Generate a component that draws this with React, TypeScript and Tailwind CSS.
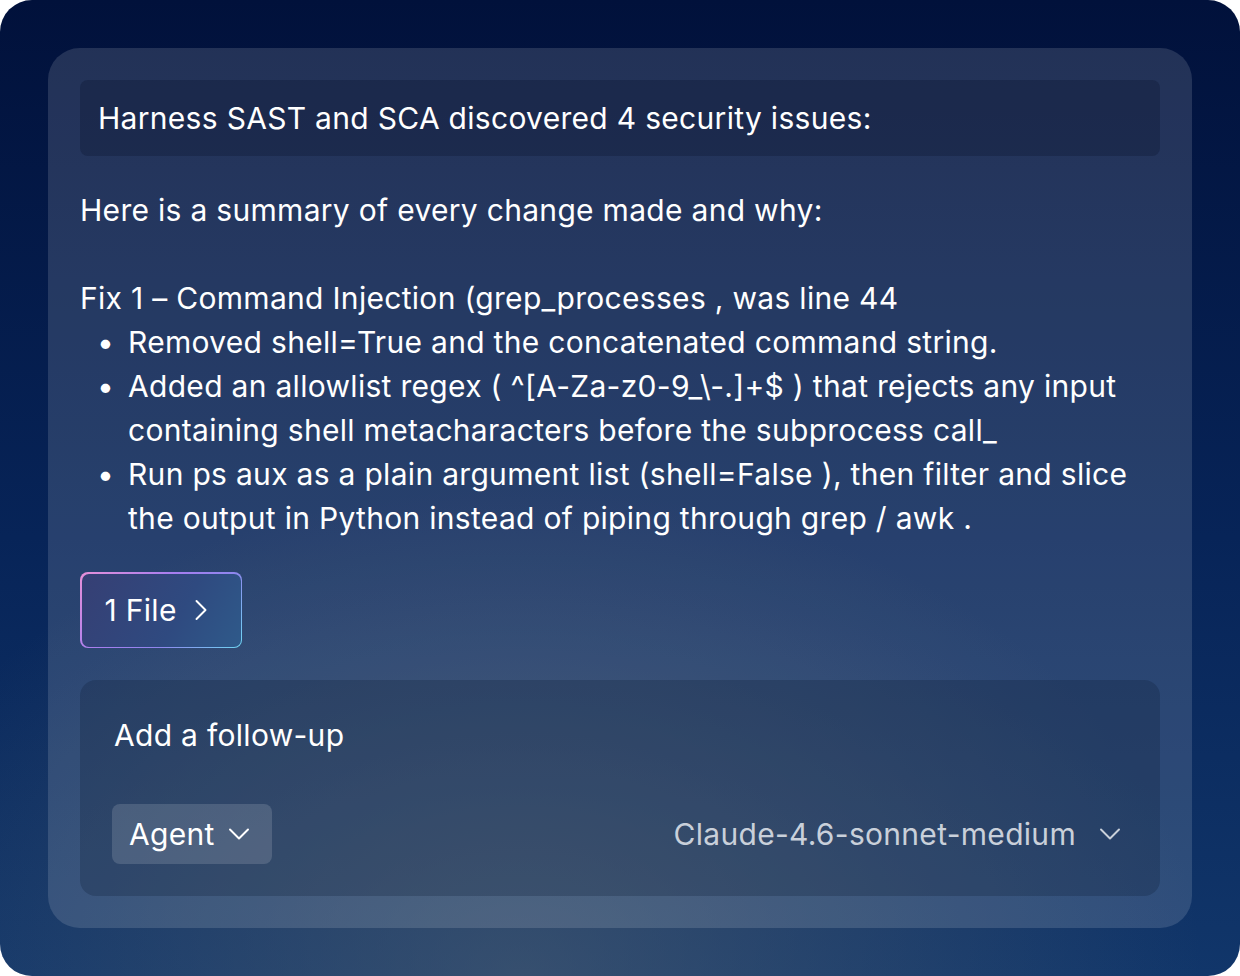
import React from 'react';
import { ChevronRight, ChevronDown } from 'lucide-react';

const bullets = [
  ['Removed shell=True and the concatenated command string.'],
  [
    'Added an allowlist regex ( ^[A-Za-z0-9_\\-.]+$ ) that rejects any input',
    'containing shell metacharacters before the subprocess call_',
  ],
  [
    'Run ps aux as a plain argument list (shell=False ), then filter and slice',
    'the output in Python instead of piping through grep / awk .',
  ],
];

export default function App() {
  return (
    <div className="bg-white w-[1240px] h-[976px]" style={{ fontFamily: 'Inter, "Noto Sans", sans-serif' }}>
      <div className="relative w-[1240px] h-[976px] rounded-[32px] overflow-hidden p-12 bg-[linear-gradient(180deg,#01113b_0%,#072458_55%,#11366a_100%)]">
        {/* soft glow behind the bottom of the card */}
        <div className="absolute inset-0 bg-[radial-gradient(ellipse_55%_50%_at_42%_100%,rgba(85,100,115,0.55),rgba(85,100,115,0)_100%)]" />

        <div className="relative h-full rounded-[32px] bg-white/[0.13] p-8 flex flex-col gap-8 text-white text-[30px] tracking-[0.3px]">
          {/* header */}
          <div className="h-[76px] rounded-lg bg-[#0a1530]/30 flex items-center px-[18px]">
            Harness SAST and SCA discovered 4 security issues:
          </div>

          {/* summary */}
          <div className="leading-[44px]">
            <p>Here is a summary of every change made and why:</p>
            <p>&nbsp;</p>
            <p>Fix 1 – Command Injection (grep_processes , was line 44</p>
            <ul>
              {bullets.map((lines, i) => (
                <li key={i} className="flex">
                  <span className="w-[48px] shrink-0 pl-[17px]">•</span>
                  <span>
                    {lines.map((l, j) => (
                      <span key={j} className="block whitespace-nowrap">{l}</span>
                    ))}
                  </span>
                </li>
              ))}
            </ul>
          </div>

          {/* file button */}
          <div className="self-start p-[1.5px] rounded-lg bg-[linear-gradient(135deg,#e890d8_0%,#a67ef0_40%,#8f86ee_65%,#6ed6f2_100%)]">
            <div className="w-[159px] h-[73px] rounded-[7px] bg-[linear-gradient(120deg,#363f74_0%,#2f4a80_60%,#2f5a8a_100%)] flex items-center pl-[23px] gap-[6px]">
              <span>1 File</span>
              <ChevronRight size={36} strokeWidth={1.3} />
            </div>
          </div>

          {/* follow-up */}
          <div className="flex-1 rounded-2xl bg-[#0c1a33]/25 px-8 pt-[33px] pb-8 flex flex-col justify-between">
            <div className="leading-[44px] pl-[2px]">Add a follow-up</div>
            <div className="flex items-center justify-between">
              <div className="h-[60px] w-[160px] rounded-lg bg-white/[0.14] flex items-center pl-[17px] gap-[6px]">
                <span>Agent</span>
                <ChevronDown size={36} strokeWidth={1.3} />
              </div>
              <div className="flex items-center gap-[16px] text-[#c9d0da]">
                <span>Claude-4.6-sonnet-medium</span>
                <ChevronDown size={36} strokeWidth={1.3} />
              </div>
            </div>
          </div>
        </div>
      </div>
    </div>
  );
}
